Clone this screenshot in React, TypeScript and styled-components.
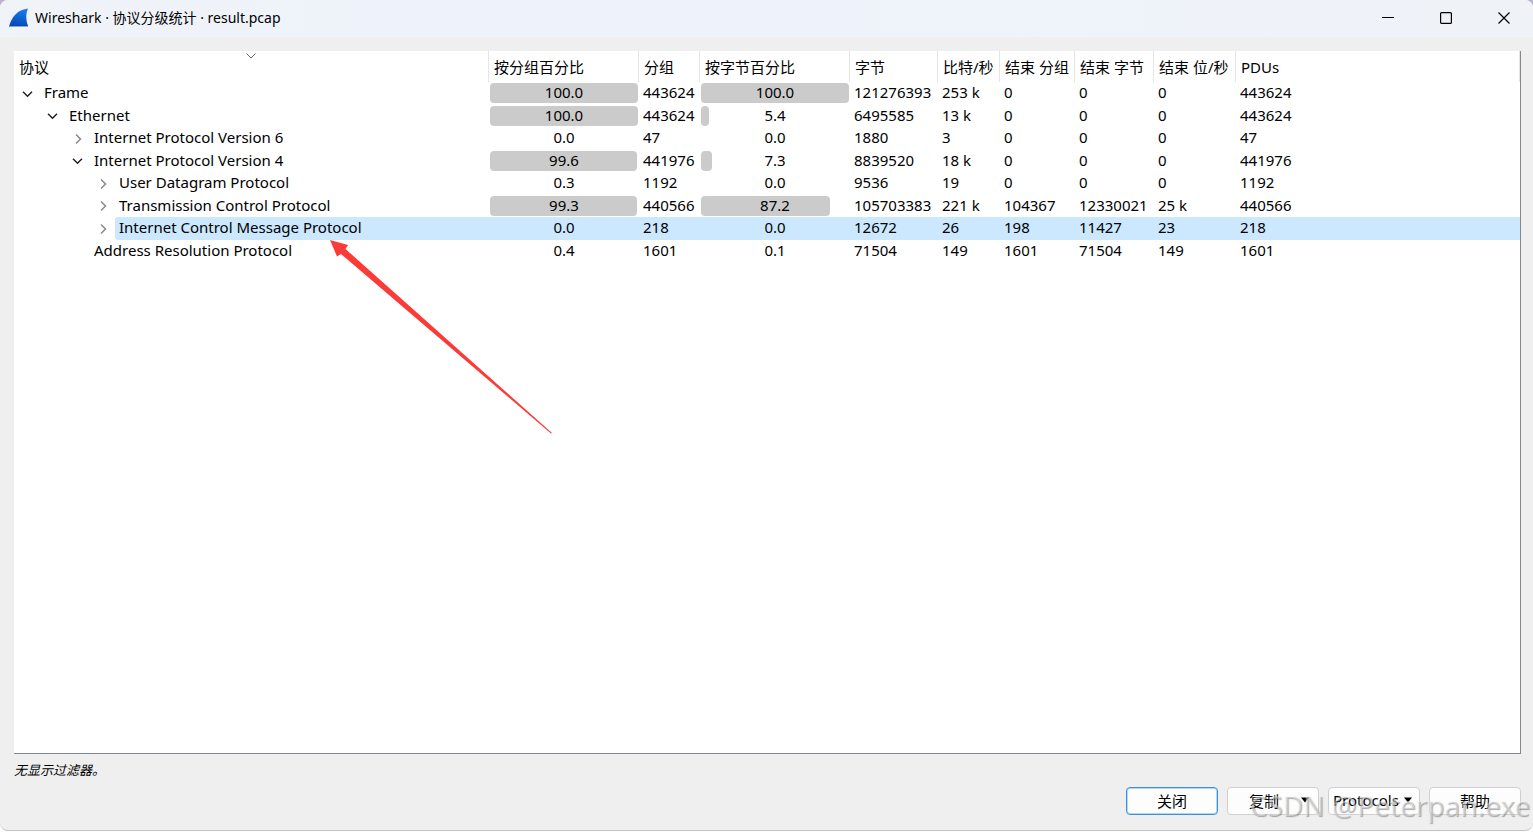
import React from 'react';
import styled, { createGlobalStyle, css } from 'styled-components';

const GlobalStyle = createGlobalStyle`
  * { box-sizing: border-box; }
  html, body, #root { height: 100%; }
  body {
    margin: 0;
    background: #fcfcfd;
    color: #000;
    font-family: "Noto Sans", "Noto Sans CJK SC", sans-serif;
    font-size: 15px;
    overflow: hidden;
  }
`;

const Backdrop = styled.div`
  height: 100%;
  padding-bottom: 1px;
  background: linear-gradient(#b9b4cd 0 50%, #fcfcfd 50%);
`;

const Window = styled.div`
  position: relative;
  height: 100%;
  display: flex;
  flex-direction: column;
  background: #efefef;
  border-bottom: 1px solid #c3c3c3;
  border-radius: 8px;
  overflow: hidden;
`;

const TitleBar = styled.header`
  flex: none;
  display: flex;
  align-items: center;
  height: 37px;
  padding: 0 0 2px 9px;
  background: linear-gradient(90deg, #f0f3f8, #eef3fb 30%, #eff3fa 70%, #eff3f8);
`;

const Title = styled.h1`
  flex: 1;
  margin: 0 0 0 6px;
  font-size: 14px;
  font-weight: 400;
  line-height: 20px;
`;

const CaptionButton = styled.button`
  display: flex;
  align-items: center;
  justify-content: center;
  width: 58px;
  height: 34px;
  padding: 0;
  border: 0;
  background: transparent;
`;

const Body = styled.main`
  flex: 1;
  min-height: 0;
  display: flex;
  flex-direction: column;
  padding: 14px 12px 15px 14px;
`;

const TreeFrame = styled.section`
  flex: 1;
  min-height: 0;
  background: #fff;
  border-right: 1px solid #828790;
  border-bottom: 1px solid #828790;
  overflow: hidden;
`;

const Tree = styled.table`
  width: 100%;
  table-layout: fixed;
  border-collapse: separate;
  border-spacing: 0;
  white-space: nowrap;
`;

const Col = styled.col<{ $w?: number }>`
  ${(p) => p.$w && css`width: ${p.$w}px;`}
`;

const HeadCell = styled.th`
  position: relative;
  height: 31px;
  padding: 1px 0 0 5px;
  border-right: 1px solid #e5e5e5;
  text-align: left;
  font-weight: 400;
  line-height: 20px;
`;

const SortMark = styled.svg`
  position: absolute;
  top: 2px;
  left: 0;
  right: 0;
  margin: 0 auto;
`;

const Row = styled.tr<{ $selected?: boolean }>`
  height: 22px;
  line-height: 20px;
  &:nth-child(odd) { height: 23px; }
  --fill: ${(p) => (p.$selected ? '#cce8ff' : 'transparent')};
`;

const Cell = styled.td`
  padding: 0 0 0 4px;
  background: var(--fill);
  vertical-align: top;
`;

const NameCell = styled.td`
  height: inherit;
  padding: 0;
`;

const NameLine = styled.div<{ $level: number }>`
  display: flex;
  height: 100%;
  padding-left: ${(p) => p.$level * 25 + 1}px;
`;

const Expander = styled.button`
  display: flex;
  flex: none;
  align-items: center;
  justify-content: center;
  width: 25px;
  padding: 0;
  border: 0;
  background: transparent;
`;

const Name = styled.span`
  flex: 1;
  padding-left: 4px;
  border-radius: 3px 0 0 3px;
  background: var(--fill);
`;

const BarCell = styled(Cell)`
  padding: 1px 1px 0;
`;

const Meter = styled.div`
  display: grid;
  height: 20px;
  grid-template-rows: 20px;
  line-height: 18px;
  text-align: center;
  & > * { grid-area: 1 / 1; }
`;

const Fill = styled.span`
  border-radius: 4px;
  background: #cbcbcb;
`;

const FilterNote = styled.p`
  flex: none;
  margin: 6px 0 7px;
  font-size: 13px;
  font-style: italic;
  line-height: 20px;
`;

const Actions = styled.footer`
  flex: none;
  display: flex;
  justify-content: flex-end;
  gap: 9px;
`;

const Button = styled.button<{ $primary?: boolean }>`
  display: flex;
  align-items: center;
  justify-content: center;
  gap: 2px;
  width: 92px;
  height: 28px;
  padding: 0 0 2px;
  border: 1px solid ${(p) => (p.$primary ? '#3c91d6' : '#d0d0d0')};
  border-radius: 4px;
  background: #fdfdfd;
  color: #000;
  font: inherit;
  font-size: 15px;
  white-space: nowrap;
  ${(p) => p.$primary && css`box-shadow: inset 0 0 0 1px #b3d6f2;`}
`;

const MenuButton = styled(Button)`
  justify-content: space-between;
  padding: 0 8px 2px 21px;
`;

const WideMenuButton = styled(MenuButton)`
  padding: 0 6px 2px 4px;
`;

const Watermark = styled.div`
  position: absolute;
  right: 3px;
  bottom: 5px;
  color: rgba(255, 255, 255, 0.4);
  font-size: 28px;
  line-height: 40px;
  text-shadow: 1px 1px 1px rgba(90, 90, 90, 0.5);
  pointer-events: none;
`;

const Pointer = styled.svg`
  position: absolute;
  left: 330px;
  top: 240px;
  pointer-events: none;
`;

const FinIcon = () => (
  <svg width="20" height="20" viewBox="0 0 20 20" aria-hidden="true">
    <defs>
      <linearGradient id="fin" x1="0.7" y1="0" x2="0.5" y2="1">
        <stop offset="0" stopColor="#1a7df0" />
        <stop offset="1" stopColor="#0547b4" />
      </linearGradient>
    </defs>
    <path d="M0 19C2 12 6 2 19 .5C16.500 6 17 13 19 17.500V19Z" fill="url(#fin)" />
    <path d="M.3 18.500H19" stroke="#8ea4c6" />
  </svg>
);

const Chevron = ({ open }: { open: boolean }) => (
  <svg width="12" height="12" viewBox="0 0 12 12" fill="none" aria-hidden="true">
    {open ? (
      <path d="M1 3.800L5.500 8.300L10 3.800" stroke="#222" strokeWidth="1.500" />
    ) : (
      <path d="M4 1.500L8.500 6L4 10.500" stroke="#8a8a8a" strokeWidth="1.500" />
    )}
  </svg>
);

const Caret = () => (
  <svg width="10" height="6" viewBox="0 0 10 6" aria-hidden="true">
    <path d="M1 0.500H9L5 5.500Z" fill="#000" />
  </svg>
);

const heads: [string, number?][] = [
  ['协议', 475],
  ['按分组百分比', 150],
  ['分组', 61],
  ['按字节百分比', 150],
  ['字节', 88],
  ['比特/秒', 62],
  ['结束 分组', 75],
  ['结束 字节', 79],
  ['结束 位/秒', 82],
  ['PDUs'],
];

interface Protocol {
  name: string;
  level: number;
  open?: boolean;
  selected?: boolean;
  packetShare: number;
  packets: number;
  byteShare: number;
  rest: string[];
}

const protocols: Protocol[] = [
  { name: 'Frame', level: 0, open: true, packetShare: 100, packets: 443624, byteShare: 100, rest: ['121276393', '253 k', '0', '0', '0', '443624'] },
  { name: 'Ethernet', level: 1, open: true, packetShare: 100, packets: 443624, byteShare: 5.4, rest: ['6495585', '13 k', '0', '0', '0', '443624'] },
  { name: 'Internet Protocol Version 6', level: 2, open: false, packetShare: 0, packets: 47, byteShare: 0, rest: ['1880', '3', '0', '0', '0', '47'] },
  { name: 'Internet Protocol Version 4', level: 2, open: true, packetShare: 99.6, packets: 441976, byteShare: 7.3, rest: ['8839520', '18 k', '0', '0', '0', '441976'] },
  { name: 'User Datagram Protocol', level: 3, open: false, packetShare: 0.3, packets: 1192, byteShare: 0, rest: ['9536', '19', '0', '0', '0', '1192'] },
  { name: 'Transmission Control Protocol', level: 3, open: false, packetShare: 99.3, packets: 440566, byteShare: 87.2, rest: ['105703383', '221 k', '104367', '12330021', '25 k', '440566'] },
  { name: 'Internet Control Message Protocol', level: 3, open: false, selected: true, packetShare: 0, packets: 218, byteShare: 0, rest: ['12672', '26', '198', '11427', '23', '218'] },
  { name: 'Address Resolution Protocol', level: 2, packetShare: 0.4, packets: 1601, byteShare: 0.1, rest: ['71504', '149', '1601', '71504', '149', '1601'] },
];

const Share = ({ value }: { value: number }) => (
  <BarCell>
    <Meter>
      {value >= 1 && <Fill style={{ width: `${value}%` }} />}
      <span>{value.toFixed(1)}</span>
    </Meter>
  </BarCell>
);

export default function App() {
  return (
    <Backdrop>
      <GlobalStyle />
      <Window>
        <TitleBar>
          <FinIcon />
          <Title>Wireshark · 协议分级统计 · result.pcap</Title>
          <CaptionButton aria-label="Minimize">
            <svg width="12" height="12"><path d="M0 5.500H12" stroke="#000" /></svg>
          </CaptionButton>
          <CaptionButton aria-label="Maximize">
            <svg width="12" height="12"><rect x="0.600" y="0.600" width="10.800" height="10.800" rx="1" fill="none" stroke="#000" strokeWidth="1.200" /></svg>
          </CaptionButton>
          <CaptionButton aria-label="Close">
            <svg width="12" height="12"><path d="M.5.5L11.500 11.500M11.500.5L.5 11.500" stroke="#000" strokeWidth="1.200" /></svg>
          </CaptionButton>
        </TitleBar>
        <Body>
          <TreeFrame>
            <Tree>
              <colgroup>
                {heads.map(([label, w]) => <Col key={label} $w={w} />)}
              </colgroup>
              <thead>
                <tr>
                  {heads.map(([label], i) => (
                    <HeadCell key={label} scope="col">
                      {label}
                      {i === 0 && (
                        <SortMark width="10" height="6" aria-hidden="true">
                          <path d="M.5.5L5 5L9.500.5" fill="none" stroke="#666" />
                        </SortMark>
                      )}
                    </HeadCell>
                  ))}
                </tr>
              </thead>
              <tbody>
                {protocols.map((p) => (
                  <Row key={p.name} $selected={p.selected}>
                    <NameCell>
                      <NameLine $level={p.level}>
                        {p.open === undefined ? (
                          <Expander as="span" />
                        ) : (
                          <Expander aria-expanded={p.open} aria-label={p.name}>
                            <Chevron open={p.open} />
                          </Expander>
                        )}
                        <Name>{p.name}</Name>
                      </NameLine>
                    </NameCell>
                    <Share value={p.packetShare} />
                    <Cell>{p.packets}</Cell>
                    <Share value={p.byteShare} />
                    {p.rest.map((v, i) => <Cell key={i}>{v}</Cell>)}
                  </Row>
                ))}
              </tbody>
            </Tree>
          </TreeFrame>
          <FilterNote>无显示过滤器。</FilterNote>
          <Actions>
            <Button $primary>关闭</Button>
            <MenuButton>复制<Caret /></MenuButton>
            <WideMenuButton>Protocols<Caret /></WideMenuButton>
            <Button>帮助</Button>
          </Actions>
        </Body>
        <Pointer width="222" height="194" viewBox="0 0 222 194" aria-hidden="true">
          <path d="M0 0L18 5L15.500 9L222 193L221 193.500L11 14L7 16.500Z" fill="#fc3a38" />
        </Pointer>
        <Watermark>CSDN @Peterpan.exe</Watermark>
      </Window>
    </Backdrop>
  );
}
